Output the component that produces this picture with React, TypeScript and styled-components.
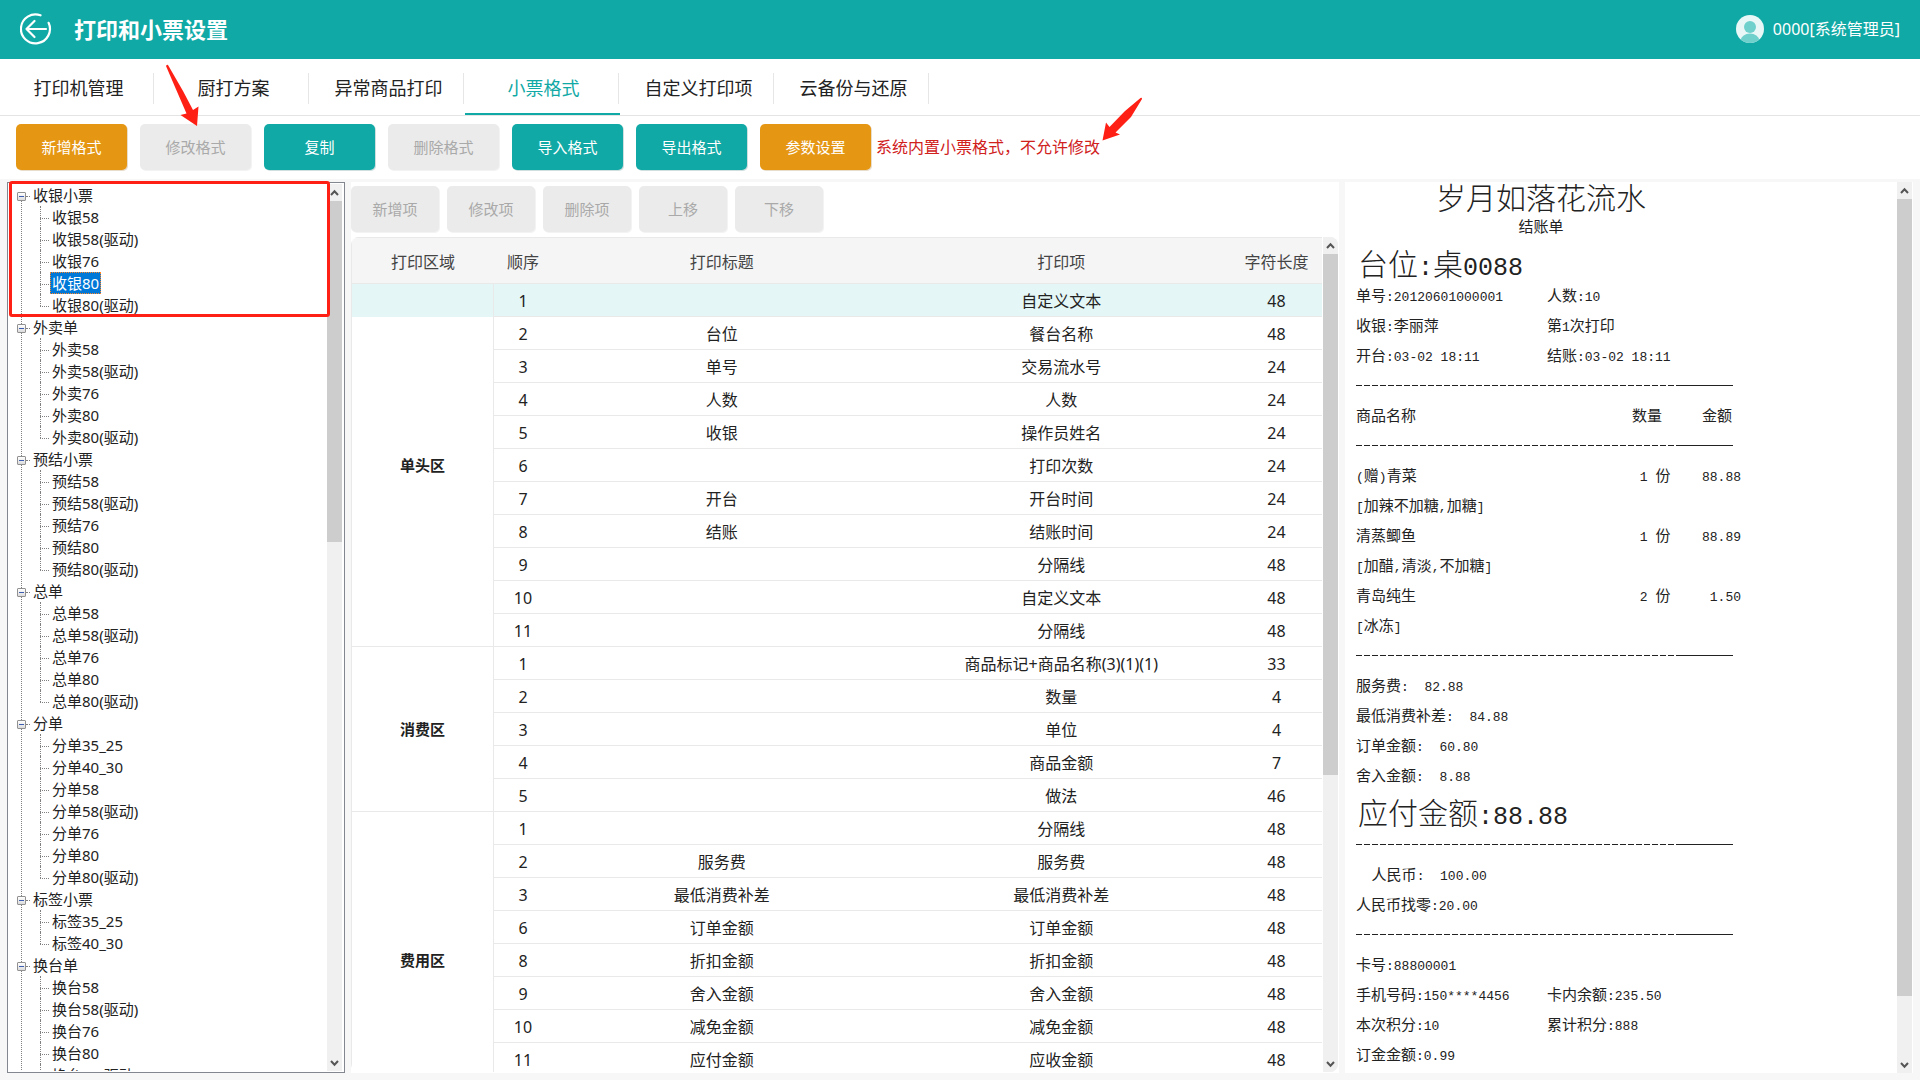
import React from "react";
import styled, { createGlobalStyle, css } from "styled-components";

const TEAL = "#11a9a5";
const AMBER = "#e59714";
const RED = "#ff2015";

const GlobalStyle = createGlobalStyle`
  * { box-sizing: border-box; }
  html, body { margin: 0; padding: 0; }
  body {
    background: #f7f7f7;
    color: #222;
    font-family: "Noto Sans", "Noto Sans CJK SC", sans-serif;
    font-size: 16px;
  }
  button { font-family: inherit; padding: 0; cursor: pointer; }
`;

const Page = styled.div`
  position: relative;
  display: flex;
  flex-direction: column;
  height: 100vh;
  overflow: hidden;
`;

const Header = styled.header`
  flex: none;
  display: flex;
  align-items: center;
  height: 59px;
  padding: 0 20px 2px;
  background: ${TEAL};
  color: #fff;
`;

const BackButton = styled.button`
  display: flex;
  width: 32px;
  height: 32px;
  border: 0;
  background: none;
`;

const Title = styled.h1`
  margin: 0 auto 0 22px;
  font-size: 22px;
  line-height: 32px;
  font-weight: 700;
`;

const User = styled.div`
  display: flex;
  align-items: center;
  gap: 9px;
  font-size: 16px;
  line-height: 24px;
`;

const Tabs = styled.nav`
  flex: none;
  display: flex;
  height: 57px;
  background: #fff;
  border-bottom: 1px solid #e4e4e4;
`;

const Tab = styled.a<{ $active?: boolean }>`
  position: relative;
  width: 155px;
  padding: 14px 0 0 2px;
  text-align: center;
  text-decoration: none;
  font-size: 18px;
  line-height: 30px;
  color: ${(p) => (p.$active ? TEAL : "#222")};
  border-bottom: 2px solid ${(p) => (p.$active ? TEAL : "transparent")};
  &::after {
    content: "";
    position: absolute;
    right: 1px;
    top: 14px;
    width: 1px;
    height: 31px;
    background: #e6e6e6;
  }
`;

const Toolbar = styled.div<{ $compact?: boolean }>`
  flex: none;
  display: flex;
  align-items: center;
  background: #fff;
  ${(p) =>
    p.$compact
      ? css`
          gap: 8px;
          padding: 4px 0;
        `
      : css`
          gap: 13px;
          padding: 8px 16px 9px;
          margin-bottom: 3px;
        `}
`;

const tones = {
  primary: css`background: ${TEAL}; color: #fff; box-shadow: 1px 1px 0 #cfdede;`,
  accent: css`background: ${AMBER}; color: #fff; box-shadow: 1px 1px 0 #e8dccb;`,
  muted: css`background: #ebebeb; color: #a9a9a9; box-shadow: 1px 1px 0 #f3f3f3; cursor: default;`,
};

const ToolButton = styled.button<{ $tone: keyof typeof tones; $small?: boolean }>`
  width: ${(p) => (p.$small ? 88 : 111)}px;
  height: 46px;
  border: 0;
  border-radius: 5px;
  font-size: 15px;
  line-height: 24px;
  ${(p) => tones[p.$tone]}
`;

const Notice = styled.span`
  margin-left: -8px;
  font-size: 16px;
  line-height: 24px;
  color: #d0211c;
`;

const Workspace = styled.main`
  flex: 1;
  min-height: 0;
  display: grid;
  grid-template-columns: 338px minmax(0, 1fr) 568px;
  gap: 6px;
  padding: 0 7px 7px;
`;

/* ---------- scrollbar ---------- */

const Rail = styled.div`
  flex: none;
  display: flex;
  flex-direction: column;
  width: 15px;
  background: #f0f0f0;
`;

const RailButton = styled.button`
  flex: none;
  display: flex;
  align-items: center;
  justify-content: center;
  width: 15px;
  height: 17px;
  border: 0;
  background: #f0f0f0;
`;

const Thumb = styled.div<{ $share: number }>`
  height: ${(p) => p.$share}%;
  background: #cdcdcd;
`;

const RailTrack = styled.div`
  flex: 1;
`;

const Scrollbar = ({ share }: { share: number }) => (
  <Rail>
    <RailButton aria-label="向上滚动">
      <svg width="9" height="8" viewBox="0 0 9 8">
        <path d="M1 6 4.500 2.200 8 6" fill="none" stroke="#555" strokeWidth="2" />
      </svg>
    </RailButton>
    <RailTrack>
      <Thumb $share={share} />
    </RailTrack>
    <RailButton aria-label="向下滚动">
      <svg width="9" height="8" viewBox="0 0 9 8">
        <path d="M1 2 4.500 5.800 8 2" fill="none" stroke="#555" strokeWidth="2" />
      </svg>
    </RailButton>
  </Rail>
);

/* ---------- format tree ---------- */

const TreePanel = styled.aside`
  position: relative;
  display: flex;
  min-height: 0;
  padding: 1px 2px 1px 0;
  background: #fff;
  border: 1px solid #828790;
`;

const TreeScroll = styled.div`
  flex: 1;
  overflow: hidden;
  padding-left: 9px;
`;

const TreeList = styled.ul`
  position: relative;
  margin: 0;
  padding: 0;
  list-style: none;
  &::before {
    content: "";
    position: absolute;
    left: 4px;
    top: 12px;
    bottom: 0;
    border-left: 1px dotted #808080;
  }
`;

const GroupRow = styled.div`
  display: flex;
  align-items: center;
  height: 22px;
  font-size: 15px;
  line-height: 22px;
`;

const Toggle = styled.button`
  position: relative;
  width: 9px;
  height: 9px;
  margin-top: 2px;
  border: 1px solid #919191;
  border-radius: 1px;
  background: linear-gradient(#fff, #dcdcdc);
  &::after {
    content: "";
    position: absolute;
    left: 1px;
    top: 3px;
    width: 5px;
    height: 1px;
    background: #3c5db0;
  }
`;

const Stub = styled.span<{ $w: number }>`
  width: ${(p) => p.$w}px;
  margin: 2px 3px 0 0;
  border-top: 1px dotted #808080;
`;

const Leaves = styled.ul`
  margin: 0;
  padding: 0 0 0 23px;
  list-style: none;
`;

const Leaf = styled.li`
  position: relative;
  display: flex;
  align-items: center;
  height: 22px;
  font-size: 15px;
  line-height: 20px;
  &::before {
    content: "";
    position: absolute;
    left: 0;
    top: 0;
    height: 22px;
    border-left: 1px dotted #808080;
  }
  &:last-child::before { height: 12px; }
`;

const LeafLabel = styled.span<{ $selected?: boolean }>`
  margin-left: -2px;
  padding: 0 1px;
  border: 1px dotted transparent;
  ${(p) => p.$selected && css`background: #0078d7; color: #fff; border-color: #ff8728;`}
`;

const Highlight = styled.div`
  position: absolute;
  left: 1px;
  top: -2px;
  width: 321px;
  height: 136px;
  border: 3px solid ${RED};
  border-radius: 3px;
  pointer-events: none;
`;

const tree: [string, string[]][] = [
  ["收银小票", ["收银58", "收银58(驱动)", "收银76", "收银80", "收银80(驱动)"]],
  ["外卖单", ["外卖58", "外卖58(驱动)", "外卖76", "外卖80", "外卖80(驱动)"]],
  ["预结小票", ["预结58", "预结58(驱动)", "预结76", "预结80", "预结80(驱动)"]],
  ["总单", ["总单58", "总单58(驱动)", "总单76", "总单80", "总单80(驱动)"]],
  ["分单", ["分单35_25", "分单40_30", "分单58", "分单58(驱动)", "分单76", "分单80", "分单80(驱动)"]],
  ["标签小票", ["标签35_25", "标签40_30"]],
  ["换台单", ["换台58", "换台58(驱动)", "换台76", "换台80", "换台80(驱动)"]],
];

const FormatTree = () => (
  <TreePanel>
    <TreeScroll>
      <TreeList>
        {tree.map(([name, leaves]) => (
          <li key={name}>
            <GroupRow>
              <Toggle aria-label={name} />
              <Stub $w={4} />
              {name}
            </GroupRow>
            <Leaves>
              {leaves.map((leaf) => (
                <Leaf key={leaf}>
                  <Stub $w={9} />
                  <LeafLabel $selected={leaf === "收银80"}>{leaf}</LeafLabel>
                </Leaf>
              ))}
            </Leaves>
          </li>
        ))}
      </TreeList>
    </TreeScroll>
    <Scrollbar share={40} />
    <Highlight />
  </TreePanel>
);

/* ---------- print item table ---------- */

const ItemsPanel = styled.section`
  display: flex;
  flex-direction: column;
  min-width: 0;
  min-height: 0;
  background: #fff;
`;

const TableFrame = styled.div`
  flex: 1;
  display: flex;
  gap: 1px;
  min-height: 0;
  margin: 1px 1px 1px 0;
  overflow: hidden;
  border-radius: 8px;
`;

const TableScroll = styled.div`
  flex: 1;
  overflow: hidden;
`;

const ItemTable = styled.table`
  width: 100%;
  table-layout: fixed;
  border-collapse: separate;
  border-spacing: 0;
  border-left: 1px solid #e9e9e9;
  font-size: 16px;
  line-height: 24px;
  text-align: center;
`;

const HeadCell = styled.th`
  height: 47px;
  padding: 2px 0 0;
  background: #f5f5f5;
  border-top: 1px solid #e9e9e9;
  border-bottom: 1px solid #e9e9e9;
  font-weight: 400;
  color: #444;
`;

const Cell = styled.td`
  height: 33px;
  padding: 2px 0 0;
  border-bottom: 1px solid #e9e9e9;
`;

const AreaCell = styled.th<{ $current?: boolean }>`
  padding: 0;
  border-right: 1px solid #e9e9e9;
  border-bottom: 1px solid #e9e9e9;
  font-size: 15px;
  font-weight: 700;
  background: ${(p) => (p.$current ? "linear-gradient(#e5f6f6 33px, #fff 33px)" : "#fff")};
`;

const ItemRow = styled.tr<{ $current?: boolean }>`
  background: ${(p) => (p.$current ? "#e5f6f6" : "#fff")};
`;

type Item = [string, string, string, string];
const areas: { name: string; items: Item[] }[] = [
  {
    name: "单头区",
    items: [
      ["1", "", "自定义文本", "48"],
      ["2", "台位", "餐台名称", "48"],
      ["3", "单号", "交易流水号", "24"],
      ["4", "人数", "人数", "24"],
      ["5", "收银", "操作员姓名", "24"],
      ["6", "", "打印次数", "24"],
      ["7", "开台", "开台时间", "24"],
      ["8", "结账", "结账时间", "24"],
      ["9", "", "分隔线", "48"],
      ["10", "", "自定义文本", "48"],
      ["11", "", "分隔线", "48"],
    ],
  },
  {
    name: "消费区",
    items: [
      ["1", "", "商品标记+商品名称(3)(1)(1)", "33"],
      ["2", "", "数量", "4"],
      ["3", "", "单位", "4"],
      ["4", "", "商品金额", "7"],
      ["5", "", "做法", "46"],
    ],
  },
  {
    name: "费用区",
    items: [
      ["1", "", "分隔线", "48"],
      ["2", "服务费", "服务费", "48"],
      ["3", "最低消费补差", "最低消费补差", "48"],
      ["6", "订单金额", "订单金额", "48"],
      ["8", "折扣金额", "折扣金额", "48"],
      ["9", "舍入金额", "舍入金额", "48"],
      ["10", "减免金额", "减免金额", "48"],
      ["11", "应付金额", "应收金额", "48"],
      ["", "", "", ""],
    ],
  },
];

const PrintItems = () => (
  <TableFrame>
    <TableScroll>
      <ItemTable>
        <colgroup>
          <col style={{ width: 142 }} />
          <col style={{ width: 58 }} />
          <col />
          <col />
          <col style={{ width: 91 }} />
        </colgroup>
        <thead>
          <tr>
            {["打印区域", "顺序", "打印标题", "打印项", "字符长度"].map((h) => (
              <HeadCell key={h}>{h}</HeadCell>
            ))}
          </tr>
        </thead>
        <tbody>
          {areas.map((area, a) =>
            area.items.map((item, i) => (
              <ItemRow key={area.name + i} $current={a === 0 && i === 0}>
                {i === 0 && (
                  <AreaCell rowSpan={area.items.length} $current={a === 0}>
                    {area.name}
                  </AreaCell>
                )}
                {item.map((value, c) => (
                  <Cell key={c}>{value}</Cell>
                ))}
              </ItemRow>
            ))
          )}
        </tbody>
      </ItemTable>
    </TableScroll>
    <Scrollbar share={65} />
  </TableFrame>
);

/* ---------- receipt preview ---------- */

const PreviewPanel = styled.section`
  display: flex;
  min-height: 0;
  padding-right: 1px;
  background: #fff;
`;

const Paper = styled.div`
  flex: 1;
  overflow: hidden;
  padding-left: 11px;
  font-family: "Noto Sans CJK SC", sans-serif;
  font-size: 15px;
  color: #222;
`;

const Line = styled.p<{ $center?: boolean }>`
  display: flex;
  width: 370px;
  height: 30px;
  margin: 0;
  line-height: 28px;
  white-space: pre;
  justify-content: ${(p) => (p.$center ? "center" : "flex-start")};
`;

const LargeLine = styled(Line)`
  font-size: 30px;
  font-weight: 300;
`;

const TotalLine = styled(LargeLine)`
  height: 39px;
  padding-top: 6px;
  padding-left: 2px;
`;

const Half = styled.span`
  width: 191px;
`;

const Mono = styled.span<{ $large?: boolean }>`
  font-family: "Liberation Mono", monospace;
  font-size: ${(p) => (p.$large ? 25 : 13)}px;
  line-height: 1;
`;

const Rule = styled.hr`
  width: 377px;
  height: 1px;
  margin: 14px 0 15px;
  border: 0;
  background: linear-gradient(#222, #222) right / 57px 1px no-repeat,
    repeating-linear-gradient(90deg, #222 0, #222 6px, transparent 6px, transparent 8px);
`;

const GoodsTable = styled.table`
  width: 400px;
  table-layout: fixed;
  border-collapse: collapse;
  line-height: 28px;
  text-align: left;
  white-space: pre;
  th, td { height: 30px; padding: 0 0 2px; font-weight: 400; }
  td[colspan] hr { margin: 14px 0 13px; }
`;

/* Half-width runs are set in the fixed-pitch face, the rest in the Chinese one. */
const Text = ({ children, large }: { children: string; large?: boolean }) => (
  <span>
    {children.split(/([\x20-\x7e]+)/).map((part, i) =>
      i % 2 ? (
        <Mono key={i} $large={large}>
          {part}
        </Mono>
      ) : (
        part
      )
    )}
  </span>
);

const Pair = ({ left, right }: { left: string; right?: string }) => (
  <Line>
    <Half>
      <Text>{left}</Text>
    </Half>
    {right && <Text>{right}</Text>}
  </Line>
);

const goods = [
  ["(赠)青菜", " 1 份", "88.88", "[加辣不加糖,加糖]"],
  ["清蒸鲫鱼", " 1 份", "88.89", "[加醋,清淡,不加糖]"],
  ["青岛纯生", " 2 份", " 1.50", "[冰冻]"],
];

const Receipt = () => (
  <PreviewPanel>
    <Paper>
      <LargeLine $center>岁月如落花流水</LargeLine>
      <Line $center>结账单</Line>
      <TotalLine>
        <Text large>台位:桌0088</Text>
      </TotalLine>
      <Pair left="单号:20120601000001" right="人数:10" />
      <Pair left="收银:李丽萍" right="第1次打印" />
      <Pair left="开台:03-02 18:11" right="结账:03-02 18:11" />
      <Rule />
      <GoodsTable>
        <colgroup>
          <col style={{ width: 276 }} />
          <col style={{ width: 70 }} />
          <col />
        </colgroup>
        <thead>
          <tr>
            <th>商品名称</th>
            <th>数量</th>
            <th>金额</th>
          </tr>
        </thead>
        <tbody>
          <tr>
            <td colSpan={3}>
              <Rule />
            </td>
          </tr>
          {goods.map(([name, qty, price, note]) => (
            <React.Fragment key={name}>
              <tr>
                <td><Text>{name}</Text></td>
                <td><Text>{qty}</Text></td>
                <td><Text>{price}</Text></td>
              </tr>
              <tr>
                <td colSpan={3}><Text>{note}</Text></td>
              </tr>
            </React.Fragment>
          ))}
        </tbody>
      </GoodsTable>
      <Rule />
      <Pair left="服务费:  82.88" />
      <Pair left="最低消费补差:  84.88" />
      <Pair left="订单金额:  60.80" />
      <Pair left="舍入金额:  8.88" />
      <TotalLine>
        <Text large>应付金额:88.88</Text>
      </TotalLine>
      <Rule />
      <Pair left="  人民币:  100.00" />
      <Pair left="人民币找零:20.00" />
      <Rule />
      <Pair left="卡号:88800001" />
      <Pair left="手机号码:150****4456" right="卡内余额:235.50" />
      <Pair left="本次积分:10" right="累计积分:888" />
      <Pair left="订金金额:0.99" />
    </Paper>
    <Scrollbar share={93} />
  </PreviewPanel>
);

/* ---------- callout arrows ---------- */

const Callout = styled.svg<{ $x: number; $y: number }>`
  position: absolute;
  left: ${(p) => p.$x}px;
  top: ${(p) => p.$y}px;
  pointer-events: none;
`;

const tabs = ["打印机管理", "厨打方案", "异常商品打印", "小票格式", "自定义打印项", "云备份与还原"];

const actions: [string, keyof typeof tones][] = [
  ["新增格式", "accent"],
  ["修改格式", "muted"],
  ["复制", "primary"],
  ["删除格式", "muted"],
  ["导入格式", "primary"],
  ["导出格式", "primary"],
  ["参数设置", "accent"],
];

export default function App() {
  return (
    <Page>
      <GlobalStyle />
      <Header>
        <BackButton aria-label="返回">
          <svg width="32" height="32" viewBox="0 0 32 32" fill="none" stroke="#fff" strokeWidth="2.200" strokeLinecap="round" strokeLinejoin="round">
            <path d="M20.500 2.300A14.500 14.500 0 1 0 28.600 9.800" />
            <path d="M26 16H6.500M14.500 8 6.500 16 14.500 24" />
          </svg>
        </BackButton>
        <Title>打印和小票设置</Title>
        <User>
          <svg width="28" height="28" viewBox="0 0 28 28">
            <clipPath id="avatar"><circle cx="14" cy="14" r="14" /></clipPath>
            <circle cx="14" cy="14" r="14" fill="#e9f7f7" />
            <g clipPath="url(#avatar)" fill="#6fd0cc">
              <circle cx="14" cy="12" r="6" />
              <ellipse cx="14" cy="25" rx="9" ry="6.500" />
            </g>
          </svg>
          0000[系统管理员]
        </User>
      </Header>
      <Tabs>
        {tabs.map((t) => (
          <Tab key={t} href="#" $active={t === "小票格式"}>
            {t}
          </Tab>
        ))}
      </Tabs>
      <Toolbar>
        {actions.map(([label, tone]) => (
          <ToolButton key={label} $tone={tone} disabled={tone === "muted"}>
            {label}
          </ToolButton>
        ))}
        <Notice>系统内置小票格式，不允许修改</Notice>
      </Toolbar>
      <Workspace>
        <FormatTree />
        <ItemsPanel>
          <Toolbar $compact>
            {["新增项", "修改项", "删除项", "上移", "下移"].map((label) => (
              <ToolButton key={label} $tone="muted" $small disabled>
                {label}
              </ToolButton>
            ))}
          </Toolbar>
          <PrintItems />
        </ItemsPanel>
        <Receipt />
      </Workspace>
      <Callout $x={166} $y={64} width="34" height="64" viewBox="0 0 34 64">
        <path d="M0 2Q1 0 2 1L17 27 27 46 32.500 42.500 31 62 14.500 51 20.500 49.500 9 23Z" fill={RED} />
      </Callout>
      <Callout $x={1100} $y={96} width="44" height="48" viewBox="0 0 44 48">
        <path d="M40.500 2Q42 1 42 3L31 21 15.500 36.500 20 38.500 2.500 44.500 6 26.500 9.500 31 25 15Z" fill={RED} />
      </Callout>
    </Page>
  );
}
